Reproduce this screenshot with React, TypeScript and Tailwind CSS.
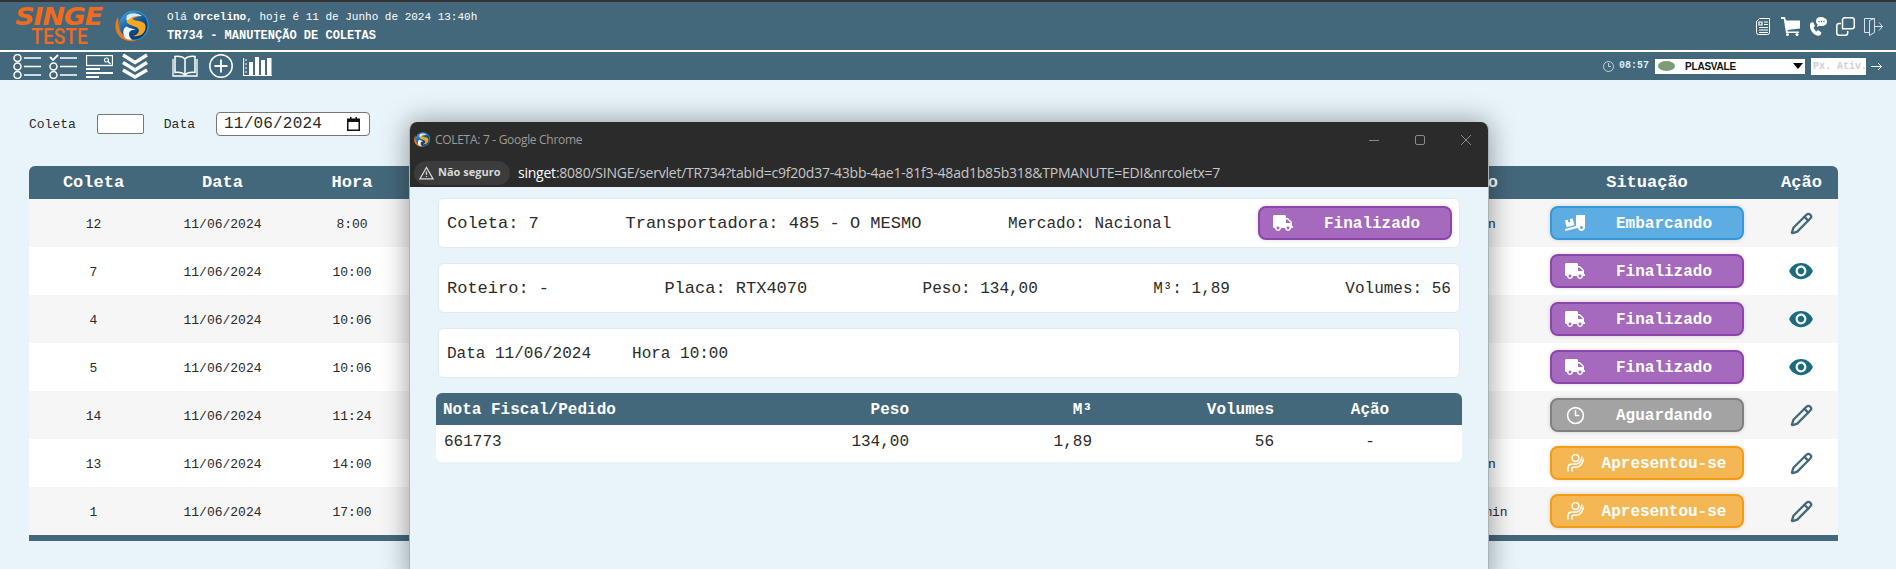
import { Clock3, Pencil } from 'lucide-react';
import { FaTruck, FaTruckLoading } from 'react-icons/fa';
import { MdVisibility } from 'react-icons/md';

type Status = 'Embarcando' | 'Finalizado' | 'Aguardando' | 'Apresentou-se';

const rows: { id: string; hora: string; tempo: string; status: Status; view?: boolean }[] = [
  { id: '12', hora: '8:00', tempo: '10 min', status: 'Embarcando' },
  { id: '7', hora: '10:00', tempo: '', status: 'Finalizado', view: true },
  { id: '4', hora: '10:06', tempo: '', status: 'Finalizado', view: true },
  { id: '5', hora: '10:06', tempo: '', status: 'Finalizado', view: true },
  { id: '14', hora: '11:24', tempo: '', status: 'Aguardando' },
  { id: '13', hora: '14:00', tempo: '10 min', status: 'Apresentou-se' },
  { id: '1', hora: '17:00', tempo: '12h 10min', status: 'Apresentou-se' },
];

const statusClass: Record<Status, string> = {
  Embarcando: 'bg-[#5dade2] border-[#3498db]',
  Finalizado: 'bg-[#a569bd] border-[#8e44ad]',
  Aguardando: 'bg-[#a3a3a3] border-[#808080]',
  'Apresentou-se': 'bg-[#f5b754] border-[#f39c12]',
};

function WaveIcon() {
  return (
    <svg width="18" height="18" viewBox="0 0 18 18" fill="none" stroke="white" strokeWidth="1.5" strokeLinecap="round">
      <circle cx="9.500" cy="4" r="3.400" />
      <path d="M2 17v-3.500C2 11 4 10 6 10h4c3 0 5-3 6-7" />
      <path d="M6 17v-2.500c0-.8.5-1.200 1.200-1.200H10c3 0 6-2.800 7.500-8" />
    </svg>
  );
}

function StatusIcon({ status }: { status: Status }) {
  if (status === 'Embarcando') return <FaTruckLoading size={20} color="white" />;
  if (status === 'Finalizado') return <FaTruck size={20} color="white" />;
  if (status === 'Aguardando') return <Clock3 size={19} color="white" strokeWidth={2} />;
  return <WaveIcon />;
}

function StatusButton({ status }: { status: Status }) {
  return (
    <div className={`flex h-[34px] w-[194px] items-center rounded-lg border-2 shadow-[0_0_4px_rgba(0,0,0,0.15)] ${statusClass[status]}`}>
      <span className="ml-[13px] flex w-5 shrink-0 justify-center">
        <StatusIcon status={status} />
      </span>
      <span className="flex-1 pl-[1px] pt-[2px] text-center text-[16px] font-bold text-white">{status}</span>
    </div>
  );
}

function Logo({ width }: { width: number }) {
  return (
    <svg width={width} height={(width * 32) / 40} viewBox="0 0 40 32">
      <defs>
        <linearGradient id={`ball${width}`} x1="0.15" y1="0.1" x2="0.8" y2="0.95">
          <stop offset="0" stopColor="#3c97d8" />
          <stop offset="0.55" stopColor="#0f4f8f" />
          <stop offset="1" stopColor="#0a3468" />
        </linearGradient>
      </defs>
      <circle cx="21" cy="15.500" r="15" fill="#2d8fca" />
      <circle cx="20.500" cy="15.500" r="14" fill={`url(#ball${width})`} />
      <path d="M5 7C0 15 2 26 12 30c4 1.500 8 1.500 12 .5-7 0-14-3-17-10-1.500-4-1.500-9-2-13.500z" fill="#ea7a1d" />
      <path d="M29 6C22 2.500 13 5 13.500 11c.5 5 10 4.500 12 8 1.500 3-1.500 6-5.500 7 7 1.500 13-3 12.500-10C32 10 22 11.500 20 9.500 19 8 23 6.500 29 6z" fill="#f8a51f" />
      <path d="M12 28c-2.500-4-2.500-9.500 1.500-11.500 3 2 7 2 9.500 3.500-4-1-7 1-7 4 0 2 1 4 3 5.500-2.500.5-5 0-7-1.500z" fill="#eef5fa" />
      <path d="M14 5.500C18 2.500 24 2.500 29 6c-6-.5-11 .5-12 3-1 1-2.500 1-3.500 1 0-2 0-3 .5-4.500z" fill="#dcecf6" />
    </svg>
  );
}

function ToolbarIcons() {
  return (
    <div className="flex items-center">
      <svg width="28" height="25" viewBox="0 0 28 25" fill="none" stroke="white" strokeWidth="1.5" className="ml-[13px]">
        <circle cx="4.500" cy="4" r="3.500" />
        <circle cx="4.500" cy="12.500" r="3.500" />
        <circle cx="4.500" cy="21" r="3.500" />
        <path d="M11 4h17M11 12.500h17M11 21h17" />
      </svg>
      <svg width="28" height="25" viewBox="0 0 28 25" fill="none" stroke="white" strokeWidth="1.5" className="ml-2">
        <path d="M1 3l3 3 5-5" strokeWidth="1.800" />
        <circle cx="4.500" cy="12.500" r="3.500" />
        <circle cx="4.500" cy="21" r="3.500" />
        <path d="M11 4h17M11 12.500h17M11 21h17" />
      </svg>
      <svg width="27" height="23" viewBox="0 0 27 23" fill="none" stroke="white" className="ml-[9px]">
        <rect x="0.500" y="0.500" width="26" height="10" strokeWidth="1.300" />
        <circle cx="20.500" cy="5" r="2" strokeWidth="1.200" />
        <path d="M22 6.500l2.500 2.500" strokeWidth="1.200" />
        <path d="M0 14h14M0 18h27M0 22h13" strokeWidth="2" />
      </svg>
      <svg width="26" height="26" viewBox="0 0 26 26" fill="none" stroke="white" strokeWidth="3.400" className="ml-[9px]">
        <path d="M1 2l12 7.500L25 2M1 9.500l12 7.500 12-7.500M1 17l12 7 12-7" />
      </svg>
      <svg width="26" height="22" viewBox="0 0 26 22" fill="none" stroke="white" strokeWidth="1.500" className="ml-6">
        <path d="M13 4C10.500 1.500 7 1 3 1.500v16c4-.5 7.500 0 10 2.500 2.500-2.500 6-3 10-2.500v-16C19 1 15.500 1.500 13 4zM13 4v16" />
        <path d="M1 4v17h24V4" strokeWidth="1.300" />
      </svg>
      <svg width="24" height="26" viewBox="0 0 24 26" fill="none" stroke="white" strokeWidth="1.500" className="ml-[11px]">
        <circle cx="12" cy="13" r="11.200" />
        <path d="M12 6.500v13M5.500 13h13" strokeWidth="1.800" />
      </svg>
      <svg width="29" height="20" viewBox="0 0 29 20" fill="white" className="ml-[10px]">
        <path d="M0.500 2v17.500H29" fill="none" stroke="white" strokeWidth="1.200" />
        <path d="M2 4h2M2 8h2M2 12h2M2 16h2" stroke="white" strokeWidth="1" />
        <rect x="6" y="6" width="4" height="13" />
        <rect x="12" y="1" width="4" height="18" />
        <rect x="18" y="4" width="4" height="15" />
        <rect x="24" y="2" width="4.500" height="17" />
      </svg>
    </div>
  );
}

function HeaderIcons() {
  return (
    <div className="ml-auto flex items-center pr-[13px]">
      <svg width="14" height="17" viewBox="0 0 14 17" fill="none" stroke="white" strokeWidth="1">
        <path d="M3.500.5l10 0v14a2 2 0 0 1-2 2H2.500a2 2 0 0 1-2-2V3.500z" />
        <path d="M3 4h3v3H3zM8 4h4M8 6.500h4M3 9.500h9M3 12h9M3 14.500h9" strokeWidth="1.200" />
      </svg>
      <svg width="19" height="19" viewBox="0 0 19 19" fill="white" className="ml-[11px]">
        <path d="M0 0h4l1 3.500H19v8L6.500 13l.3 1.500H18V16H5L2.800 2H0z" />
        <circle cx="6.500" cy="17.500" r="1.500" />
        <circle cx="16" cy="17.500" r="1.500" />
      </svg>
      <svg width="19" height="19" viewBox="0 0 19 19" fill="white" className="ml-2">
        <path d="M2.500 6l2.500-1 2 4-1.500 1.500c.5 1.500 1.500 3 3 4L10 13l3.500 2.500-1 2.500c-2 1.500-5 .5-7.500-2C2.500 13.500 1 9 2.500 6z" />
        <path d="M12.500 0C15.500 0 19 1.500 19 4.500S16.500 9 13.500 9c-.8 0-1.500-.1-2-.3L9 10l.6-2.500C8.600 6.700 8 5.700 8 4.500 8 1.500 9.500 0 12.500 0z" />
        <circle cx="11" cy="4.500" r=".7" fill="#44687b" />
        <circle cx="13.500" cy="4.500" r=".7" fill="#44687b" />
        <circle cx="16" cy="4.500" r=".7" fill="#44687b" />
      </svg>
      <svg width="19" height="19" viewBox="0 0 19 19" fill="none" stroke="white" strokeWidth="1.500" className="ml-[9px]">
        <path d="M6.500 12.500V3a2.200 2.200 0 0 1 2.200-2.200h7.600A2.200 2.200 0 0 1 18.300 3v6.500a2.200 2.200 0 0 1-2.200 2.200H7" />
        <path d="M5 6.500H3A2.200 2.200 0 0 0 .8 8.700V16A2.200 2.200 0 0 0 3 18.200h6.500a2.200 2.200 0 0 0 2.200-2.200v-2" />
      </svg>
      <svg width="19" height="19" viewBox="0 0 19 19" fill="none" stroke="#d8e1e6" strokeWidth="1" className="ml-[9px]">
        <path d="M.5 1.500h10v14l-5 3v-15l5-2M5.500 15.500H.5v-14" />
        <path d="M11 9.500h7.500M15 5.500l3.500 4-3.500 4" />
      </svg>
    </div>
  );
}

export default function App() {
  return (
    <div className="relative h-[569px] w-[1896px] overflow-hidden bg-[#e8f4fa] font-['Liberation_Mono',monospace] text-[#2a2a2a]">
      {/* Top bar */}
      <div className="flex h-[50px] items-center border-t-2 border-[#333] bg-[#44687b] text-white">
        <div className="ml-[13px] flex w-[92px] flex-col items-center leading-none text-[#f26a1b]">
          <span className="inline-block scale-x-[1.12] font-['DejaVu_Sans',sans-serif] text-[24px] font-bold italic leading-[20px] tracking-[-1px]">SINGE</span>
          <span className="inline-block scale-x-[0.87] font-['Roboto',sans-serif] text-[22px] font-medium leading-[19px]">TESTE</span>
        </div>
        <div className="ml-2">
          <Logo width={40} />
        </div>
        <div className="ml-[14px] flex flex-col gap-[5px] pt-[1px]">
          <span className="text-[11px] leading-[14px]">
            Olá <b>Orcelino</b>, hoje é 11 de Junho de 2024 13:40h
          </span>
          <span className="text-[12px] font-bold leading-[14px]">TR734 - MANUTENÇÃO DE COLETAS</span>
        </div>
        <HeaderIcons />
      </div>
      <div className="h-[2px] bg-white" />

      {/* Toolbar */}
      <div className="flex h-[28px] items-center bg-[#44687b]">
        <ToolbarIcons />
        <div className="ml-auto flex items-center pr-[14px]">
          <svg width="11" height="11" viewBox="0 0 11 11" fill="none" stroke="#dfe8ec" strokeWidth=".8">
            <circle cx="5.500" cy="5.500" r="5" />
            <path d="M5.500 2v3.500H8" />
          </svg>
          <span className="ml-[5px] text-[10px] font-bold leading-none text-[#d6eefa]">08:57</span>
          <div className="ml-[6px] flex h-[15px] w-[150px] items-center bg-white">
            <span className="ml-[3px] h-[10px] w-[17px] rounded-[50%] bg-[#7d9b76]" />
            <span className="ml-[10px] font-['Liberation_Sans',sans-serif] text-[10px] font-bold tracking-[-0.2px] text-[#111]">PLASVALE</span>
            <span className="ml-auto mr-[2px] h-0 w-0 border-x-[5px] border-t-[6px] border-x-transparent border-t-black" />
          </div>
          <div className="ml-[6px] flex h-[17px] w-[55px] items-center overflow-hidden whitespace-nowrap bg-white pl-[2px] text-[10px] font-bold text-[#cfcfcf]">Px. Ativ.</div>
          <svg width="11" height="9" viewBox="0 0 11 9" fill="none" stroke="white" className="ml-[5px]">
            <path d="M0 4.500h10.500M7 1l3.500 3.500L7 8" />
          </svg>
        </div>
      </div>

      {/* Filters */}
      <div className="ml-[29px] mt-8 flex h-6 items-center text-[13px]">
        <span className="pt-[2px]">Coleta</span>
        <div className="ml-[21px] h-5 w-[47px] rounded-[2px] border border-[#767676] bg-white" />
        <span className="ml-[20px] pt-[2px]">Data</span>
        <div className="ml-[21px] flex h-6 w-[154px] items-center rounded-[4px] border border-[#767676] bg-white pl-[7px] pr-[9px] text-[16px] tracking-[0.2px]">
          11/06/2024
          <svg width="13" height="14" viewBox="0 0 13 14" className="ml-auto">
            <path d="M3 0h1.500v1.500h4V0H10v1.500h3V14H0V1.500h3zM1.500 5v7.500h10V5z" fill="#111" />
          </svg>
        </div>
      </div>

      {/* Coletas table */}
      <div className="mx-[29px] mt-[30px] w-[1809px]">
        <div className="grid h-[33px] grid-cols-[129px_129px_130px_1002px_107px_242px_70px] items-center rounded-t-md bg-[#44687b] text-center text-[17px] font-bold text-white">
          <span>Coleta</span>
          <span>Data</span>
          <span>Hora</span>
          <span />
          <span>Tempo</span>
          <span>Situação</span>
          <span className="pr-[3px]">Ação</span>
        </div>
        {rows.map((r, i) => (
          <div
            key={r.id}
            className={`grid h-12 grid-cols-[129px_129px_130px_1002px_107px_242px_70px] items-center text-center text-[13px] ${i % 2 === 0 ? 'bg-[#f6f6f6]' : 'bg-white'}`}
          >
            <span className="pt-[3px]">{r.id}</span>
            <span className="pt-[3px]">11/06/2024</span>
            <span className="pt-[3px]">{r.hora}</span>
            <span />
            <span className="pt-[3px]">{r.tempo}</span>
            <span className="flex justify-center">
              <StatusButton status={r.status} />
            </span>
            <span className="flex justify-center pr-[4px]">
              {r.view ? <MdVisibility size={26} color="#1b6a80" /> : <Pencil size={23} color="#44687b" strokeWidth={2.4} />}
            </span>
          </div>
        ))}
        <div className="h-[6px] bg-[#44687b]" />
      </div>

      {/* Popup window */}
      <div className="absolute left-[409px] top-[122px] h-[460px] w-[1080px] overflow-hidden rounded-t-lg border-x border-[#a9b2b7] bg-[#e8f4fa] shadow-[0_0_28px_rgba(0,0,0,0.4)]">
        <div className="h-[65px] bg-[#2b2b2b] font-['Open_Sans',sans-serif]">
          <div className="flex h-9 items-center pl-[3px] pr-[17px]">
            <Logo width={19} />
            <span className="ml-[3px] text-[12px] tracking-[-0.3px] text-[#9b9b9b]">COLETA: 7 - Google Chrome</span>
            <svg width="102" height="12" viewBox="0 0 102 12" fill="none" stroke="#8a8a8a" className="ml-auto">
              <path d="M0 6.500h10" />
              <rect x="46.500" y="1.500" width="9" height="9" rx="1.500" />
              <path d="M92 1l10 10M102 1L92 11" />
            </svg>
          </div>
          <div className="flex h-[29px] items-center pl-[4px]">
            <div className="flex h-6 w-[96px] items-center rounded-full bg-[#3c3c3c] pl-[5px] text-[11px] font-bold text-[#d8d8d8]">
              <svg width="15" height="14" viewBox="0 0 15 14" fill="none" stroke="#d8d8d8" strokeWidth="1.300" className="mr-[4px]">
                <path d="M7.500 1.500L14 12.800H1zM7.500 5.500v3.500M7.500 10v1" />
              </svg>
              Não seguro
            </div>
            <span className="ml-2 whitespace-nowrap text-[14px] tracking-[-0.23px] text-[#c7c7c7]">
              <span className="text-white">singet</span>:8080/SINGE/servlet/TR734?tabId=c9f20d37-43bb-4ae1-81f3-48ad1b85b318&amp;TPMANUTE=EDI&amp;nrcoletx=7
            </span>
          </div>
        </div>

        <div className="flex flex-col gap-[15px] px-[28px] pt-[11px]">
          <div className="flex h-[50px] items-center justify-between rounded-md border border-[#e0eaef] bg-white pl-2 pr-[7px] text-[17px]">
            <span className="pt-[2px]">Coleta: 7</span>
            <span className="pt-[2px]">Transportadora: 485 - O MESMO</span>
            <span className="pt-[2px] text-[16px]">Mercado: Nacional</span>
            <StatusButton status="Finalizado" />
          </div>
          <div className="flex h-[50px] items-center justify-between rounded-md border border-[#e0eaef] bg-white pl-2 pr-2 pt-[2px] text-[17px]">
            <span>Roteiro: -</span>
            <span>Placa: RTX4070</span>
            <span className="text-[16px]">Peso: 134,00</span>
            <span className="text-[16px]">M³: 1,89</span>
            <span className="text-[16px]">Volumes: 56</span>
          </div>
          <div className="flex h-[50px] items-center gap-[41px] rounded-md border border-[#e0eaef] bg-white pl-2 pt-[2px] text-[16px]">
            <span>Data 11/06/2024</span>
            <span>Hora 10:00</span>
          </div>
          <div className="-mx-[2px] overflow-hidden rounded-md bg-white">
            <div className="grid h-[32px] grid-cols-[300px_173px_183px_182px_188px] items-center bg-[#44687b] pt-[2px] text-[16px] font-bold text-white">
              <span className="pl-[7px]">Nota Fiscal/Pedido</span>
              <span className="text-right">Peso</span>
              <span className="text-right">M³</span>
              <span className="text-right">Volumes</span>
              <span className="pl-[4px] text-center">Ação</span>
            </div>
            <div className="grid h-[37px] grid-cols-[300px_173px_183px_182px_188px] items-center pb-[3px] text-[16px]">
              <span className="pl-2">661773</span>
              <span className="text-right">134,00</span>
              <span className="text-right">1,89</span>
              <span className="text-right">56</span>
              <span className="pl-[4px] text-center">-</span>
            </div>
          </div>
        </div>
      </div>
    </div>
  );
}
